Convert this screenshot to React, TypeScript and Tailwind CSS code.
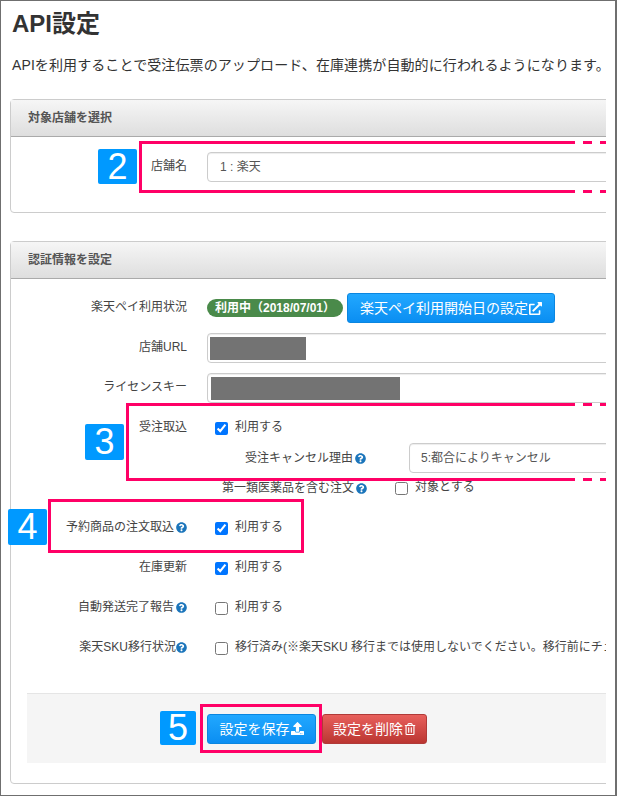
import type { ReactNode } from 'react';
import { FaExternalLinkAlt, FaQuestionCircle, FaRegTrashAlt, FaUpload } from 'react-icons/fa';

function Help() {
  return <FaQuestionCircle size={11} className="shrink-0 text-[#1b75bb]" />;
}

function Row({ label, help, tight, children, className = '' }: { label?: string; help?: boolean; tight?: boolean; children?: ReactNode; className?: string }) {
  return (
    <div className={`flex h-[30px] items-center ${className}`}>
      <div className={`mb-[2px] flex w-[176px] shrink-0 items-center justify-end text-[#444] ${tight ? '' : 'gap-[2px]'}`}>
        <span>{label}</span>
        {help && <Help />}
      </div>
      <div className="ml-[20px] flex min-w-0 flex-1 items-center">{children}</div>
    </div>
  );
}

function Check({ checked, text }: { checked?: boolean; text: string }) {
  return (
    <label className="flex items-center whitespace-nowrap text-[#444]">
      <input type="checkbox" defaultChecked={checked} className="mt-[1px]" />
      <span className="mb-[3px] ml-[7px]">{text}</span>
    </label>
  );
}

function Field({ className = '', children }: { className?: string; children?: ReactNode }) {
  return (
    <div className={`flex h-[30px] items-center rounded-[4px] border border-[#ccc] shadow-[inset_0_1px_1px_rgba(0,0,0,0.075)] ${className}`}>
      {children}
    </div>
  );
}

function Panel({ title, children, className = '' }: { title: string; children: ReactNode; className?: string }) {
  return (
    <section className={`w-[720px] rounded-[4px] border border-[#ccc] bg-white ${className}`}>
      <div className="flex h-[37px] items-center border-b border-[#aaa] bg-gradient-to-b from-[#f6f6f6] to-[#dedede] pl-[17px] font-bold text-[#555]">
        {title}
      </div>
      {children}
    </section>
  );
}

function Badge({ className, children }: { className: string; children: ReactNode }) {
  return (
    <div className={`absolute flex items-center justify-center rounded-[2px] bg-[#0099ff] text-[36px] leading-none text-white ${className}`}>
      {children}
    </div>
  );
}

function DashLine() {
  return (
    <div className="flex h-[3px]">
      <div className="flex-1 bg-[#ff0066]" />
      <div className="ml-[8px] w-[9px] bg-[#ff0066]" />
      <div className="ml-[8px] w-[6px] bg-[#ff0066]" />
    </div>
  );
}

function OpenBox({ className }: { className: string }) {
  return (
    <div className={`absolute flex flex-col justify-between border-l-[3px] border-[#ff0066] ${className}`}>
      <DashLine />
      <DashLine />
    </div>
  );
}

export default function App() {
  return (
    <div className="relative h-[796px] w-[617px] overflow-hidden border-t border-r-2 border-b border-l border-[#6f6f6f] bg-white pl-[9px] font-['Liberation_Sans','Noto_Sans_CJK_JP',sans-serif] text-xs text-[#333]">
      <h1 className="mt-[10px] ml-[2px] text-2xl leading-[26px] font-bold">API設定</h1>
      <p className="mt-[18px] ml-[2px] text-sm leading-5 tracking-[0.1px] whitespace-nowrap">
        APIを利用することで受注伝票のアップロード、在庫連携が自動的に行われるようになります。
      </p>

      <div className="mt-[24px] w-[596px] overflow-hidden">
        <Panel title="対象店舗を選択">
          <div className="pt-[15px] pb-[30px]">
            <Row label="店舗名">
              <Field className="w-[500px] pl-[12px] text-[#555]">1 : 楽天</Field>
            </Row>
          </div>
        </Panel>

        <Panel title="認証情報を設定" className="mt-[28px]">
          <div className="pt-[14px] pb-[20px]">
            <Row label="楽天ペイ利用状況" className="mb-[10px]">
              <span className="flex h-[18px] w-[136px] items-center justify-center rounded-full bg-[#4a8a4a] font-bold whitespace-nowrap text-white">
                利用中（2018/07/01）
              </span>
              <button className="ml-[4px] flex h-[30px] w-[208px] items-center justify-center gap-[1px] rounded-[3px] border border-[#0a86e0] bg-gradient-to-b from-[#21a8ff] to-[#0a8ef2] text-sm whitespace-nowrap text-white">
                楽天ペイ利用開始日の設定
                <FaExternalLinkAlt size={13} />
              </button>
            </Row>
            <Row label="店舗URL" className="mb-[10px]">
              <Field className="w-[500px] pl-[2px]">
                <div className="h-[23px] w-[96px] bg-[#737373]" />
              </Field>
            </Row>
            <Row label="ライセンスキー" className="mb-[10px]">
              <Field className="w-[500px] pl-[3px]">
                <div className="h-[23px] w-[189px] bg-[#737373]" />
              </Field>
            </Row>
            <Row label="受注取込">
              <div className="ml-[8px]">
                <Check checked text="利用する" />
              </div>
            </Row>
            <div className="ml-[196px] flex h-[30px] items-center">
              <div className="flex w-[202px] shrink-0 items-center gap-[2px] pl-[38px] whitespace-nowrap text-[#444]">
                受注キャンセル理由
                <Help />
              </div>
              <Field className="w-[300px] pl-[11px] text-[#555]">5:都合によりキャンセル</Field>
            </div>
            <div className="mb-[10px] ml-[196px] flex h-[30px] items-center">
              <div className="flex w-[188px] shrink-0 items-center gap-[2px] pl-[15px] whitespace-nowrap text-[#444]">
                第一類医薬品を含む注文
                <Help />
              </div>
              <Check text="対象とする" />
            </div>
            <Row label="予約商品の注文取込" help className="mb-[10px]">
              <div className="ml-[8px]">
                <Check checked text="利用する" />
              </div>
            </Row>
            <Row label="在庫更新" className="mb-[10px]">
              <div className="ml-[8px]">
                <Check checked text="利用する" />
              </div>
            </Row>
            <Row label="自動発送完了報告" help className="mb-[10px]">
              <div className="ml-[8px]">
                <Check text="利用する" />
              </div>
            </Row>
            <Row label="楽天SKU移行状況" help tight>
              <div className="ml-[8px]">
                <Check text="移行済み(※楽天SKU 移行までは使用しないでください。移行前にチェックを入れると受注が取り込めなくなります)" />
              </div>
            </Row>

            <div className="mt-[30px] ml-[16px] flex h-[70px] items-center border-t border-[#e5e5e5] bg-[#f5f5f5] pl-[180px]">
              <button className="flex h-[30px] w-[109px] items-center justify-center gap-[1px] rounded-[3px] border border-[#0a86e0] bg-gradient-to-b from-[#21a8ff] to-[#0a8ef2] text-sm text-white">
                設定を保存
                <FaUpload size={13} />
              </button>
              <button className="ml-[6px] flex h-[30px] w-[105px] items-center justify-center gap-[1px] rounded-[3px] border border-[#b03a38] bg-gradient-to-b from-[#e8605c] to-[#bb3531] text-sm text-white">
                設定を削除
                <FaRegTrashAlt size={12} />
              </button>
            </div>
          </div>
        </Panel>
      </div>

      <OpenBox className="top-[140px] left-[138px] h-[52px] w-[467px]" />
      <OpenBox className="top-[402px] left-[125px] h-[78px] w-[480px]" />
      <div className="absolute top-[498px] left-[47px] h-[54px] w-[256px] border-[3px] border-[#ff0066]" />
      <div className="absolute top-[703px] left-[199px] h-[49px] w-[122px] border-[3px] border-[#ff0066]" />

      <Badge className="top-[148px] left-[97px] h-[35px] w-[39px]">2</Badge>
      <Badge className="top-[423px] left-[84px] h-[36px] w-[39px]">3</Badge>
      <Badge className="top-[508px] left-[7px] h-[36px] w-[39px]">4</Badge>
      <Badge className="top-[710px] left-[159px] h-[34px] w-[36px]">5</Badge>
    </div>
  );
}
